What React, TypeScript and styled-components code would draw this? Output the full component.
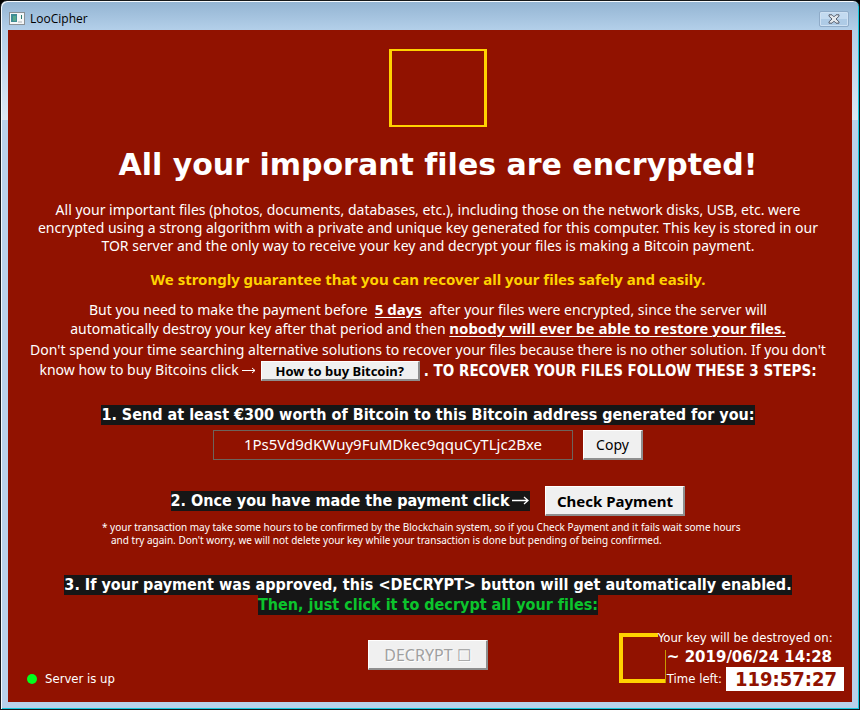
import React from 'react';
import styled, { createGlobalStyle } from 'styled-components';

const body = '"Noto Sans", "Open Sans", sans-serif';
const condensed = '"DejaVu Sans Condensed", "DejaVu Sans", sans-serif';
const wide = '"DejaVu Sans", sans-serif';

const Global = createGlobalStyle`
  * { box-sizing: border-box; }
  body { margin: 0; background: #000; font-variant-ligatures: none; }
  p, h1 { margin: 0; }
`;

const Window = styled.div`
  min-height: 100vh;
  display: flex;
  flex-direction: column;
  padding: 1px 6px 7px;
  border: 1px solid #16181a;
  border-radius: 7px 7px 0 0;
  background: linear-gradient(to bottom, #93b4d2 0, #b3cfe9 29px, #dce8f5 119px, #b9d1ea 119px);
  box-shadow: inset 1px 1px 0 #f6fafd, inset -1px -1px 0 #14c8dc;
`;

const TitleBar = styled.header`
  height: 28px;
  display: flex;
  align-items: center;
  justify-content: space-between;
  padding: 5px 4px 0 2px;
`;

const Title = styled.div`
  display: flex;
  align-items: center;
  gap: 5px;
  font: 12px/16px "Open Sans", sans-serif;
  color: #000;
`;

const CloseButton = styled.button`
  width: 30px;
  height: 16px;
  display: flex;
  align-items: center;
  justify-content: center;
  padding: 0;
  border: 1px solid #8fabc8;
  border-radius: 2px;
  background: linear-gradient(#c3daf0 50%, #aecbe6 50%);
  box-shadow: inset 0 0 0 1px #cfe1f3;
`;

const Client = styled.main`
  flex: 1;
  margin: 0 1px;
  display: flex;
  flex-direction: column;
  align-items: center;
  padding: 19px 8px 11px 4px;
  background: #911200;
  color: #fff;
  font: 14px/18px ${body};
  font-variant-ligatures: none;
  text-align: center;
`;

const Heading = styled.div`
  display: flex;
  flex-direction: column;
  align-items: center;
  gap: 20px;
  padding-left: 20px;
`;

const Emblem = styled.div`
  width: 98px;
  height: 78px;
  border: solid #ffd200;
  border-width: 2px 3px;
`;

const Headline = styled.h1`
  font: bold 30px/36px ${wide};
  font-variant-ligatures: none;
`;

const Paragraph = styled.p<{ $top: number; $line: number }>`
  margin-top: ${(p) => p.$top}px;
  line-height: ${(p) => p.$line}px;
`;

const Guarantee = styled.p`
  margin-top: 15px;
  color: #ffd200;
  font-size: 15px;
  font-weight: bold;
`;

const Stress = styled.strong`
  font-size: 15px;
  text-decoration: underline;
  text-decoration-thickness: 1px;
  text-underline-offset: 2px;
`;

const HelpRow = styled.div`
  display: flex;
  align-items: center;
  justify-content: center;
  gap: 4px;
  height: 20px;
  margin-top: 1px;
`;

const HelpText = styled.span`
  align-self: flex-start;
`;

const FollowSteps = styled.strong`
  font: bold 15px/20px ${condensed};
`;

const Button = styled.button<{ $width: number; $size: number; $bold?: boolean; $compact?: boolean }>`
  width: ${(p) => p.$width}px;
  height: ${(p) => (p.$compact ? 20 : 30)}px;
  padding: 0;
  border: solid;
  border-width: 1px 2px 2px 1px;
  border-color: #fff #8e8e8e #8e8e8e #fff;
  background: #f0f0f0;
  color: #000;
  font-family: ${body};
  font-size: ${(p) => p.$size}px;
  font-weight: ${(p) => (p.$bold ? 'bold' : 'normal')};
  line-height: 16px;
  &:disabled {
    color: #a0a0a0;
    text-shadow: 1px 1px 0 #fff;
  }
`;

const StepLabel = styled.label<{ $green?: boolean }>`
  background: #161616;
  color: ${(p) => (p.$green ? '#0cc42c' : '#fff')};
  font: bold 16px/20px ${condensed};
  font-variant-ligatures: none;
`;

const Step = styled.section<{ $top: number }>`
  margin-top: ${(p) => p.$top}px;
  display: flex;
  flex-direction: column;
  align-items: center;
`;

const StepRow = styled.div<{ $gap: number; $top?: number }>`
  display: flex;
  align-items: center;
  gap: ${(p) => p.$gap}px;
  margin-top: ${(p) => p.$top ?? 0}px;
`;

const Address = styled.input`
  width: 360px;
  height: 30px;
  padding: 0 0 2px;
  border: 1px solid #6d635c;
  background: transparent;
  color: #fff;
  font: 15px/20px ${body};
  text-align: center;
`;

const Note = styled.p`
  width: 652px;
  margin-top: 5px;
  padding-left: 9px;
  text-indent: -9px;
  text-align: left;
  font-size: 10px;
  line-height: 13px;
`;

const Arrow = styled.svg`
  vertical-align: middle;
  margin: 0 1px 2px 3px;
`;

const Footer = styled.footer`
  align-self: stretch;
  margin-top: 14px;
  display: grid;
  grid-template-columns: 1fr auto 1fr;
  align-items: end;
  font: 13px/18px ${condensed};
`;

const Status = styled.div`
  display: flex;
  align-items: center;
  gap: 8px;
  padding: 0 0 3px 15px;
`;

const Dot = styled.span`
  width: 10px;
  height: 10px;
  border-radius: 50%;
  background: #00ff1e;
`;

const DecryptSlot = styled.div`
  padding-bottom: 21px;
`;

const Deadline = styled.div`
  justify-self: end;
  display: flex;
  align-items: flex-end;
`;

const DeadlineFrame = styled.svg`
  margin: 0 -8px 8px 0;
`;

const DeadlineText = styled.div`
  display: flex;
  flex-direction: column;
  align-items: flex-start;
`;

const DueDate = styled.strong`
  padding-left: 9px;
  font: bold 15px/20px ${wide};
`;

const TimeLeft = styled.div`
  display: flex;
  align-items: center;
  gap: 4px;
  padding-left: 9px;
`;

const Timer = styled.time`
  width: 118px;
  height: 24px;
  padding-right: 7px;
  text-align: right;
  background: #fff;
  color: #911200;
  font: bold 20px/25px ${condensed};
`;

function RightArrow({ heavy }: { heavy?: boolean }) {
  return (
    <Arrow
      width={heavy ? 17 : 14}
      height="9"
      viewBox={heavy ? '0 0 17 9' : '0 0 14 9'}
      fill="none"
      stroke="#fff"
      strokeWidth={heavy ? 1.3 : 1}
    >
      {heavy ? <path d="M0 4.5H16M12 1L16 4.5L12 8" /> : <path d="M0 4.5H13M10 2L13 4.5L10 7" />}
    </Arrow>
  );
}

export default function App() {
  return (
    <>
      <Global />
      <Window>
        <TitleBar>
          <Title>
            <svg width="16" height="13" viewBox="0 0 16 13">
              <rect x=".5" y=".5" width="15" height="12" fill="#f5f7f8" stroke="#8b9196" />
              <rect x="2" y="2" width="6" height="8" fill="#3f8c95" />
              <rect x="4" y="4" width="3" height="5" fill="#58a98c" />
              <rect x="9" y="9" width="4" height="2" fill="#d0d4d6" />
              <rect x="12" y="3" width="1" height="4" fill="#2f7c70" />
            </svg>
            LooCipher
          </Title>
          <CloseButton type="button" aria-label="Close">
            <svg width="12" height="10" viewBox="0 0 12 10">
              <path d="M1 .8H4L6 2.8L8 .8H11V2.2L8 5L11 7.8V9.2H8L6 7.2L4 9.2H1V7.8L4 5L1 2.2Z" fill="#e4e8ec" stroke="#565e6e" />
            </svg>
          </CloseButton>
        </TitleBar>
        <Client>
          <Heading>
            <Emblem />
            <Headline>All your imporant files are encrypted!</Headline>
          </Heading>
          <Paragraph $top={18} $line={18}>
            All your important files (photos, documents, databases, etc.), including those on the network disks, USB, etc. were
            <br />
            encrypted using a strong algorithm with a private and unique key generated for this computer. This key is stored in our
            <br />
            TOR server and the only way to receive your key and decrypt your files is making a Bitcoin payment.
          </Paragraph>
          <Guarantee>We strongly guarantee that you can recover all your files safely and easily.</Guarantee>
          <Paragraph $top={12} $line={19}>
            But you need to make the payment before&nbsp; <Stress>5 days</Stress>&nbsp; after your files were encrypted, since the server will
            <br />
            automatically destroy your key after that period and then <Stress>nobody will ever be able to restore your files.</Stress>
          </Paragraph>
          <Paragraph $top={2} $line={20}>
            Don't spend your time searching alternative solutions to recover your files because there is no other solution. If you don't
          </Paragraph>
          <HelpRow>
            <HelpText>
              know how to buy Bitcoins click
              <RightArrow />
            </HelpText>
            <Button type="button" $width={159} $size={13} $bold $compact>
              How to buy Bitcoin?
            </Button>
            <FollowSteps>. TO RECOVER YOUR FILES FOLLOW THESE 3 STEPS:</FollowSteps>
          </HelpRow>
          <Step $top={24}>
            <StepLabel htmlFor="address">1. Send at least €300 worth of Bitcoin to this Bitcoin address generated for you:</StepLabel>
            <StepRow $gap={10} $top={5}>
              <Address id="address" readOnly value="1Ps5Vd9dKWuy9FuMDkec9qquCyTLjc2Bxe" />
              <Button type="button" $width={60} $size={14}>
                Copy
              </Button>
            </StepRow>
          </Step>
          <Step $top={26}>
            <StepRow $gap={15}>
              <StepLabel htmlFor="check">
                2. Once you have made the payment click
                <RightArrow heavy />
              </StepLabel>
              <Button id="check" type="button" $width={140} $size={15} $bold>
                Check Payment
              </Button>
            </StepRow>
            <Note>
              * your transaction may take some hours to be confirmed by the Blockchain system, so if you Check Payment and it fails wait some hours
              <br />
              and try again. Don't worry, we will not delete your key while your transaction is done but pending of being confirmed.
            </Note>
          </Step>
          <Step $top={28}>
            <StepLabel htmlFor="decrypt">3. If your payment was approved, this &lt;DECRYPT&gt; button will get automatically enabled.</StepLabel>
            <StepLabel htmlFor="decrypt" $green>
              Then, just click it to decrypt all your files:
            </StepLabel>
          </Step>
          <Footer>
            <Status>
              <Dot />
              Server is up
            </Status>
            <DecryptSlot>
              <Button id="decrypt" type="button" disabled $width={120} $size={16}>
                DECRYPT ☐
              </Button>
            </DecryptSlot>
            <Deadline>
              <DeadlineFrame width="47" height="50" viewBox="0 0 47 50">
                <path d="M0 0H39V4H4V46H46V50H0Z" fill="#ffd200" />
                <path d="M46 17H47V50H46Z" fill="#c79a00" />
              </DeadlineFrame>
              <DeadlineText>
                <span>Your key will be destroyed on:</span>
                <DueDate>~ 2019/06/24 14:28</DueDate>
                <TimeLeft>
                  Time left:
                  <Timer>119:57:27</Timer>
                </TimeLeft>
              </DeadlineText>
            </Deadline>
          </Footer>
        </Client>
      </Window>
    </>
  );
}
